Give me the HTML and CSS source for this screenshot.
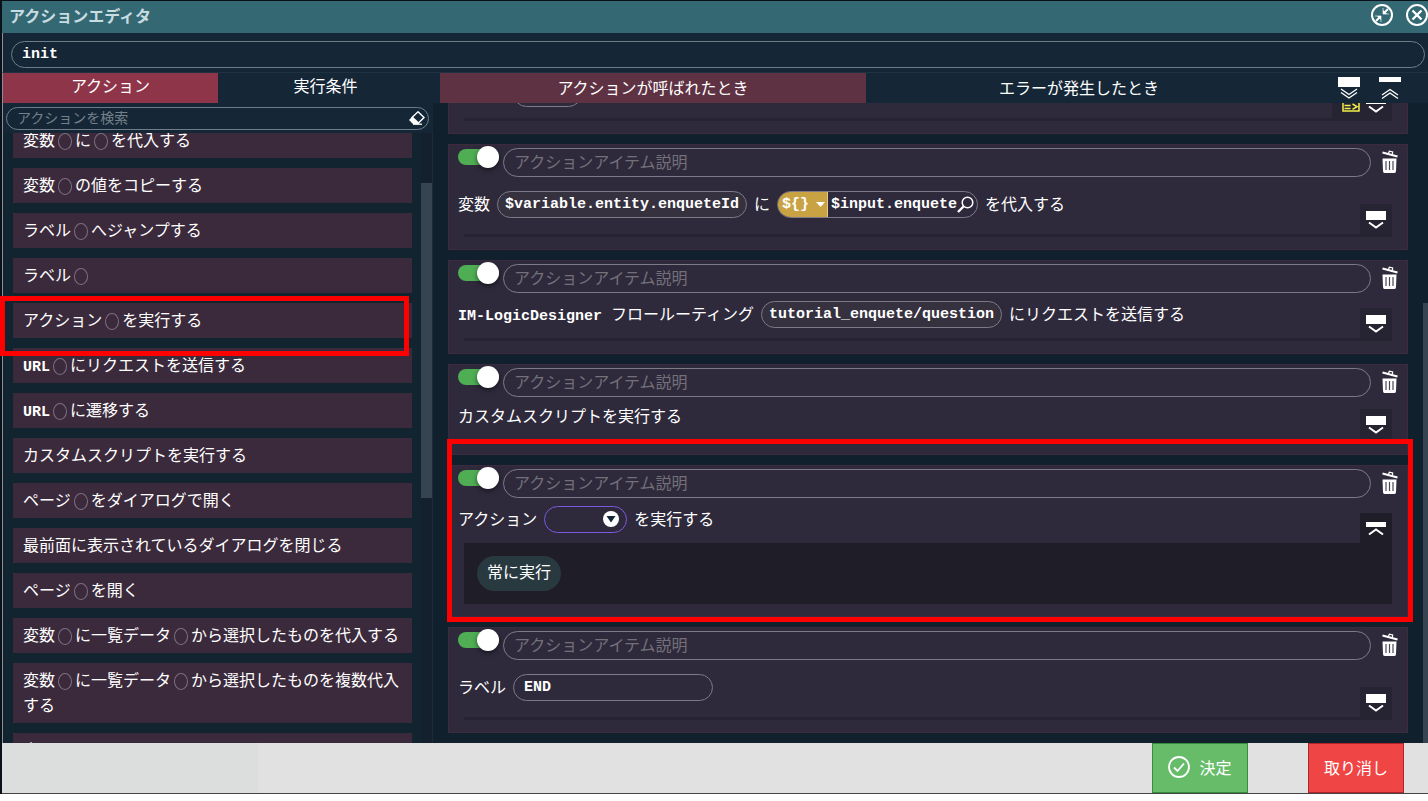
FILE: index.html
```html
<!DOCTYPE html>
<html lang="ja">
<head>
<meta charset="utf-8">
<title>アクションエディタ</title>
<link rel="stylesheet" href="styles.css">
</head>
<body>
<svg class="defs" aria-hidden="true">
  <symbol id="i-trash" viewBox="0 0 16 24">
    <path d="M0.500 2.500L15.500 6.500" stroke="#fff" stroke-width="2" fill="none"/>
    <path d="M6.500 3.500L7.300 1.200l3.400.8-.4 2.500" stroke="#fff" stroke-width="1.200" fill="none"/>
    <path d="M0.500 8.500h14l-.5 12.500q0 2-1.500 2h-10q-1.500 0-1.500-2z" fill="#fff"/>
    <path d="M4 11V20M7.500 11V20M11 11V20" stroke="#4a4757" stroke-width="1.200"/>
  </symbol>
  <symbol id="i-open" viewBox="0 0 20 18">
    <rect width="20" height="9" fill="#fff"/><path d="M3 11.500l7 5 7-5" stroke="#fff" stroke-width="2" fill="none"/>
  </symbol>
  <symbol id="i-close" viewBox="0 0 20 18">
    <rect y="2" width="20" height="5" fill="#fff"/><path d="M3 14.500l7-5 7 5" stroke="#fff" stroke-width="2" fill="none"/>
  </symbol>
</svg>
<div class="backdrop">
<main class="dialog">
  <header class="titlebar">
    <h1 class="title">アクションエディタ</h1>
    <button class="icon-btn" aria-label="縮小"><svg width="22" height="22" viewBox="0 0 22 22" fill="none" stroke="#fff"><circle cx="11" cy="11" r="10" stroke-width="2"/><path d="M12 4v6h6M4 12h6v6" stroke-width="1" stroke="#b4ccd2"/><path d="M13 9l4-4M9 13l-4 4" stroke-width="2"/><path d="M12 6v4h4zM6 12h4v4z" fill="#fff" stroke="none"/></svg></button>
    <button class="icon-btn" aria-label="閉じる"><svg width="22" height="22" viewBox="0 0 22 22" fill="none" stroke="#fff"><circle cx="11" cy="11" r="10" stroke-width="2"/><path d="M6.500 6.500l9 9M15.500 6.500l-9 9" stroke-width="2.400"/></svg></button>
  </header>
  <div class="name-row"><input class="pill name" value="init" aria-label="アクション名"></div>
  <div class="columns">
    <section class="side">
      <nav class="tabs">
        <button class="tab tab-on">アクション</button>
        <button class="tab">実行条件</button>
      </nav>
      <div class="search-row">
        <input class="pill search" placeholder="アクションを検索" aria-label="アクションを検索">
        <button class="eraser" aria-label="クリア"><svg width="16" height="14" viewBox="0 0 16 14"><path d="M9 .8l6 5.700-6 6-6-6z" fill="none" stroke="#fff" stroke-width="1.400"/><path d="M3.500 5.500l6.500 6-1.500 1.500H4L0 9z" fill="#fff"/><path d="M4 13.200h9" stroke="#fff" stroke-width="1.300"/></svg></button>
      </div>
      <div class="side-scroll">
        <ul class="list">
          <li class="item">変数<i class="slot"></i>に<i class="slot"></i>を代入する</li>
          <li class="item">変数<i class="slot"></i>の値をコピーする</li>
          <li class="item">ラベル<i class="slot"></i>へジャンプする</li>
          <li class="item">ラベル<i class="slot"></i></li>
          <li class="item">アクション<i class="slot"></i>を実行する</li>
          <li class="item"><span class="latin">URL</span><i class="slot"></i>にリクエストを送信する</li>
          <li class="item"><span class="latin">URL</span><i class="slot"></i>に遷移する</li>
          <li class="item">カスタムスクリプトを実行する</li>
          <li class="item">ページ<i class="slot"></i>をダイアログで開く</li>
          <li class="item">最前面に表示されているダイアログを閉じる</li>
          <li class="item">ページ<i class="slot"></i>を開く</li>
          <li class="item">変数<i class="slot"></i>に一覧データ<i class="slot"></i>から選択したものを代入する</li>
          <li class="item">変数<i class="slot"></i>に一覧データ<i class="slot"></i>から選択したものを複数代入する</li>
          <li class="item">変</li>
        </ul>
        <div class="track"><div class="thumb side-thumb"></div></div>
      </div>
    </section>
    <section class="flow">
      <nav class="tabs flow-tabs">
        <button class="tab tab-current">アクションが呼ばれたとき</button>
        <button class="tab">エラーが発生したとき</button>
        <div class="tools">
          <button class="icon-btn" aria-label="すべて開く"><svg width="22" height="24" viewBox="0 0 22 24" fill="none" stroke="#fff"><rect width="22" height="10" fill="#fff" stroke="none"/><path d="M3 12l8 5.500 8-5.500M3 15.500l8 5.500 8-5.500" stroke-width="1.300"/></svg></button>
          <button class="icon-btn" aria-label="すべて閉じる"><svg width="22" height="24" viewBox="0 0 22 24" fill="none" stroke="#fff"><rect width="22" height="5" fill="#fff" stroke="none"/><path d="M3 18l8-5.500 8 5.500M3 21.500l8-5.500 8 5.500" stroke-width="1.300"/></svg></button>
        </div>
      </nav>
      <div class="flow-scroll">
        <div class="cards">
          <article class="card card-cut">
            <div class="head"><input type="checkbox" class="switch" checked aria-label="有効"><input class="pill desc" aria-label="アクションアイテム説明"><button class="icon-btn" aria-label="削除"><svg width="16" height="24"><use href="#i-trash"/></svg></button></div>
            <div class="body body-cut"><input class="pill w-short" aria-label="値"></div>
            <div class="foot"><div class="fold fold-wide"><svg width="18" height="14" viewBox="0 0 18 14" fill="none" stroke="#f3f04a" stroke-width="1.500"><path d="M1 0v13h16V0M2.500 7.500h6M2.500 10.500h6M10.500 6l4.500 2.700-4.500 2.700"/></svg><button class="icon-btn" aria-label="開く"><svg width="20" height="18"><use href="#i-open"/></svg></button></div></div>
          </article>
          <article class="card">
            <div class="head"><input type="checkbox" class="switch" checked aria-label="有効"><input class="pill desc" placeholder="アクションアイテム説明" aria-label="アクションアイテム説明"><button class="icon-btn" aria-label="削除"><svg width="16" height="24"><use href="#i-trash"/></svg></button></div>
            <div class="body body-tall"><span>変数</span><input class="pill fill w-var" value="$variable.entity.enqueteId" aria-label="変数"><span>に</span>
              <div class="group"><button class="type">${}<svg width="9" height="5" viewBox="0 0 9 5"><path d="M0 0h9L4.500 5z" fill="#fff"/></svg></button><input class="value" value="$input.enquete" aria-label="代入する値"><button class="icon-btn lens" aria-label="検索"><svg width="17" height="17" viewBox="0 0 17 17" fill="none" stroke="#fff"><circle cx="10.500" cy="6.500" r="5.300" stroke-width="1.500"/><path d="M6.500 10.500L1 16" stroke-width="2.400"/></svg></button></div>
              <span>を代入する</span></div>
            <div class="foot"><button class="fold" aria-label="開く"><svg width="20" height="18"><use href="#i-open"/></svg></button></div>
          </article>
          <article class="card">
            <div class="head"><input type="checkbox" class="switch" checked aria-label="有効"><input class="pill desc" placeholder="アクションアイテム説明" aria-label="アクションアイテム説明"><button class="icon-btn" aria-label="削除"><svg width="16" height="24"><use href="#i-trash"/></svg></button></div>
            <div class="body"><span><span class="latin">IM-LogicDesigner </span>フロールーティング</span><input class="pill fill w-route" value="tutorial_enquete/question" aria-label="フロールーティング"><span>にリクエストを送信する</span></div>
            <div class="foot"><button class="fold" aria-label="開く"><svg width="20" height="18"><use href="#i-open"/></svg></button></div>
          </article>
          <article class="card">
            <div class="head"><input type="checkbox" class="switch" checked aria-label="有効"><input class="pill desc" placeholder="アクションアイテム説明" aria-label="アクションアイテム説明"><button class="icon-btn" aria-label="削除"><svg width="16" height="24"><use href="#i-trash"/></svg></button></div>
            <div class="body"><span>カスタムスクリプトを実行する</span></div>
            <div class="foot"><button class="fold" aria-label="開く"><svg width="20" height="18"><use href="#i-open"/></svg></button></div>
          </article>
          <article class="card">
            <div class="head"><input type="checkbox" class="switch" checked aria-label="有効"><input class="pill desc" placeholder="アクションアイテム説明" aria-label="アクションアイテム説明"><button class="icon-btn" aria-label="削除"><svg width="16" height="24"><use href="#i-trash"/></svg></button></div>
            <div class="body"><span>アクション</span>
              <div class="select-wrap"><select class="pill select" aria-label="アクション"><option></option></select><svg class="arrow" width="16" height="16" viewBox="0 0 16 16"><circle cx="8" cy="8" r="8" fill="#fff"/><path d="M3.500 5h9L8 11.500z" fill="#152737"/></svg></div>
              <span>を実行する</span></div>
            <div class="foot foot-open"><button class="fold" aria-label="閉じる"><svg width="20" height="18"><use href="#i-close"/></svg></button><button class="chip">常に実行</button></div>
          </article>
          <article class="card">
            <div class="head"><input type="checkbox" class="switch" checked aria-label="有効"><input class="pill desc" placeholder="アクションアイテム説明" aria-label="アクションアイテム説明"><button class="icon-btn" aria-label="削除"><svg width="16" height="24"><use href="#i-trash"/></svg></button></div>
            <div class="body body-tall"><span>ラベル</span><input class="pill w-label" value="END" aria-label="ラベル"></div>
            <div class="foot"><button class="fold" aria-label="開く"><svg width="20" height="18"><use href="#i-open"/></svg></button></div>
          </article>
        </div>
        <div class="track flow-track"><div class="thumb flow-thumb"></div></div>
      </div>
    </section>
  </div>
  <footer class="footer">
    <button class="action ok"><svg width="22" height="22" viewBox="0 0 22 22" fill="none" stroke="#fff" stroke-width="1.800"><circle cx="11" cy="11" r="10"/><path d="M6 11.500l3.500 3.500L16 7.500"/></svg>決定</button>
    <button class="action cancel">取り消し</button>
  </footer>
</main>
<div class="mark mark-item"></div>
<div class="mark mark-card"></div>
</div>
</body>
</html>
```

FILE: styles.css
```css
* { box-sizing: border-box; }

body {
  margin: 0;
  background: #fff;
  color: #fff;
  font: 16px/24px "Noto Sans CJK JP", sans-serif;
}

button, input, select {
  margin: 0;
  padding: 0;
  border: 0;
  background: none;
  color: inherit;
  font: inherit;
}

svg { display: block; flex: none; }
.defs { position: absolute; width: 0; height: 0; }

.backdrop {
  position: relative;
  height: calc(100vh - 7px);
  padding: 1px 0 0 2px;
  background: #0b1119;
  overflow: hidden;
}

.dialog {
  display: flex;
  flex-direction: column;
  height: 100%;
  background: #152737;
}

.latin {
  font: bold 15px/16px "Liberation Mono", monospace;
  white-space: pre;
}

.icon-btn { flex: none; display: flex; }

.titlebar {
  flex: none;
  display: flex;
  align-items: center;
  gap: 13px;
  height: 32px;
  padding: 0 0 4px 7px;
  background: #346974;
}

.title {
  flex: 1;
  margin: 0;
  color: #c8dce1;
  font-size: 16px;
  line-height: 24px;
}

.pill {
  height: 27px;
  padding: 0 7px;
  border: 1px solid #7d7b88;
  border-radius: 14px;
  outline: none;
  font: bold 15px "Liberation Mono", "Noto Sans CJK JP", monospace;
}

.name-row {
  flex: none;
  display: flex;
  padding: 8px 3px 4px 8px;
  border-left: 1px solid #87909a;
  border-bottom: 1px solid #1f3242;
}

.name { flex: 1; padding: 0 10px; border-color: #6f7d89; }

.columns { flex: 1; min-height: 0; display: flex; }

.side {
  flex: none;
  display: flex;
  flex-direction: column;
  width: 431px;
  border-left: 1px solid #87909a;
}

.tabs { flex: none; display: flex; height: 30px; }
.tab { flex: 1; padding-bottom: 6px; }
.tab-on { background: #8f354a; }
.tab-current { background: #5e3243; }

.search-row {
  flex: none;
  position: relative;
  display: flex;
  padding: 4px 4px 3px 3px;
}

.search {
  flex: 1;
  height: 23px;
  padding: 0 10px 3px;
  border-color: #6f7d89;
  font: 14px "Noto Sans CJK JP", sans-serif;
}

.search::placeholder { color: #74808a; opacity: 1; }
.eraser { position: absolute; right: 8px; top: 8px; }

.side-scroll {
  flex: 1;
  min-height: 0;
  display: flex;
  justify-content: space-between;
  background: #12242f;
  overflow: hidden;
}

.list {
  display: flex;
  flex-direction: column;
  gap: 10px;
  width: 409px;
  margin: -10px 0 0;
  padding: 0 0 0 10px;
  list-style: none;
}

.item {
  flex: none;
  padding: 4px 10px 6px;
  background: #3b2a3c;
  line-height: 25px;
}

.slot {
  display: inline-block;
  width: 14px;
  height: 17px;
  margin: 0 3px;
  border: 1px solid #7d7080;
  border-radius: 50%;
  vertical-align: -4px;
}

.track { flex: none; width: 12px; background: #14202d; border-right: 1px solid #1c2b38; }
.thumb { background: #364451; }
.side-thumb { height: 315px; margin-top: 50px; }

.flow {
  flex: 1;
  min-width: 0;
  display: flex;
  flex-direction: column;
}

.flow-tabs { padding-left: 7px; }
.flow-tabs .tab { padding-bottom: 3px; }

.tools {
  flex: none;
  display: flex;
  gap: 19px;
  width: 136px;
  padding: 4px 27px 0 46px;
}

.flow-scroll {
  flex: 1;
  min-height: 0;
  display: flex;
  background: #10202d;
  overflow: hidden;
}

.cards {
  flex: 1;
  min-width: 0;
  display: flex;
  flex-direction: column;
  gap: 10px;
  padding: 0 15px;
}

.card {
  flex: none;
  padding: 3px 9px 12px;
  border: 1px solid #3d2a3f;
  background: #2e2a3c;
}

.card-cut { margin-top: -64px; }

.head { display: flex; align-items: flex-start; }
.head .icon-btn { margin: 2px 0 0 11px; }

.switch {
  appearance: none;
  flex: none;
  display: flex;
  justify-content: flex-end;
  align-items: center;
  width: 41px;
  height: 16px;
  margin: 1px 4px 0 0;
  border-radius: 8px;
  background: #4fae54;
}

.switch::before {
  content: "";
  width: 22px;
  height: 22px;
  border-radius: 11px;
  background: #fff;
  box-shadow: 0 2px 5px #0008;
}

.desc {
  flex: 1;
  height: 29px;
  padding: 0 10px 3px;
  border-radius: 15px;
  font: 16px "Noto Sans CJK JP", sans-serif;
}

.desc::placeholder { color: #73707a; opacity: 1; }

.body {
  display: flex;
  align-items: center;
  gap: 7px;
  margin: 8px 0 10px;
  white-space: nowrap;
}

.body > span { height: 24px; line-height: 20px; }
.body-tall { padding: 6px 0; }
.body-cut { padding: 0 0 1px 55px; }

.w-short { width: 69px; }
.w-var { width: 250px; }
.w-route { width: 241px; }
.w-label { width: 200px; padding: 0 10px; }
.fill { background: #35313f; }

.group {
  display: flex;
  align-items: center;
  width: 201px;
  height: 27px;
  border: 1px solid #7d7b88;
  border-radius: 14px;
  overflow: hidden;
  font: bold 15px "Liberation Mono", monospace;
}

.type {
  flex: none;
  display: flex;
  align-items: center;
  gap: 7px;
  width: 50px;
  height: 100%;
  padding-left: 4px;
  border-right: 1px solid #e2c888;
  background: #c9a244;
}

.value { flex: 1; min-width: 0; padding-left: 3px; outline: none; }
.lens { margin-right: 3px; }

.select-wrap { position: relative; display: flex; }
.select { appearance: none; width: 83px; border-color: #7b59e0; }
.arrow { position: absolute; right: 8px; top: 5px; pointer-events: none; }

.foot {
  position: relative;
  height: 3px;
  margin: 0 6px;
  background: #262432;
}

.fold {
  position: absolute;
  right: 0;
  top: -30px;
  display: flex;
  justify-content: center;
  width: 32px;
  height: 33px;
  padding-top: 7px;
  background: #262432;
}

.fold-wide { justify-content: flex-end; gap: 6px; width: 60px; padding: 7px 6px 0 0; }
.fold-wide > svg { margin-top: 3px; }

.foot-open { height: auto; padding: 13px; background: #1f1d28; }
.foot-open .fold { background: #1f1d28; }

.chip {
  display: block;
  height: 35px;
  padding: 0 10px 5px;
  border-radius: 18px;
  background: #28393f;
}

.flow-track { width: 5px; background: #10202d; border: 0; }
.flow-thumb { height: 440px; margin-top: 200px; }

.footer {
  flex: none;
  display: flex;
  justify-content: flex-end;
  gap: 60px;
  height: 51px;
  padding-right: 24px;
  border-bottom: 1px solid #444;
  background: linear-gradient(90deg, #dcdedd 256px, #e1e1e1 256px);
}

.action {
  display: flex;
  align-items: center;
  justify-content: center;
  gap: 9px;
  width: 96px;
  padding-bottom: 2px;
}

.ok { border: 1px solid #388c3e; background: #66bc69; }
.cancel { border: 1px solid #b1252a; background: #f04545; }

.mark { position: absolute; border: 5px solid #f00; pointer-events: none; }
.mark-item { left: 0; top: 296px; width: 409px; height: 60px; }
.mark-card { left: 447px; right: 15px; top: 439px; height: 183px; }
```
